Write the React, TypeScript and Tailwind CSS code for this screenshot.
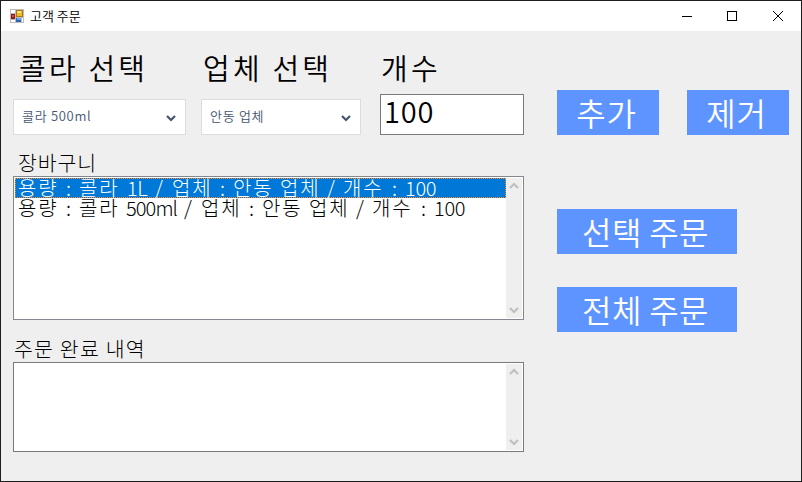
import type { ReactNode } from "react";

function Chevron({ up = false }: { up?: boolean }) {
  return (
    <svg width="10" height="8" viewBox="0 0 10 8" fill="none" stroke="currentColor" strokeWidth="2.2">
      <path d={up ? "M1 6 5 2 9 6" : "M1 2 5 6 9 2"} />
    </svg>
  );
}

function FormIcon() {
  return (
    <svg width="14" height="14" viewBox="0 0 14 14" shapeRendering="crispEdges">
      <path fill="#bdbdbd" d="M0 0h14v14H0z" />
      <path fill="#fff" d="M1 1h4v3H1zM1 11h4v2H1zM12 9h1v4h-1z" />
      <path fill="#a87810" d="M6 1h7v7H6z" />
      <path fill="#f5b921" d="M7 2h5v5H7z" />
      <path fill="#ffe18a" d="M7 2h4v2H7z" />
      <path fill="#8e1c1c" d="M1 5h4v5H1z" />
      <path fill="#d34b3b" d="M2 6h2v2H2z" />
      <path fill="#2b62bd" d="M6 9h5v4H6z" />
      <path fill="#6da4ef" d="M7 9h4v2H7z" />
    </svg>
  );
}

function Combo({ children, className }: { children: ReactNode; className: string }) {
  return (
    <div className={`flex h-9 items-center justify-between border border-[#dadce1] bg-white pr-[9px] pl-2 text-[#44546f] ${className}`}>
      <span className="pb-[3px] text-[13px] leading-none font-[350] tracking-[0.7px] whitespace-pre">{children}</span>
      <span className="flex pt-px">
        <Chevron />
      </span>
    </div>
  );
}

function ScrollTrack() {
  return (
    <div className="flex w-4 flex-col items-center justify-between bg-[#efefef] py-1 pr-px text-[#bfbfbf]">
      <Chevron up />
      <Chevron />
    </div>
  );
}

function CartRow({ size, sizeClass }: { size: string; sizeClass: string }) {
  return (
    <div className="flex tracking-[1.8px] whitespace-pre">
      <span className="w-[48px]">용량</span>
      <span className="w-[13px]">:</span>
      <span className="w-[47px]">콜라</span>
      <span className={sizeClass}>{size}</span>
      <span className="w-[17px]">/</span>
      <span className="w-[48px]">업체</span>
      <span className="w-[13px]">:</span>
      <span className="w-[47px]">안동</span>
      <span className="w-[47px]">업체</span>
      <span className="w-[16px]">/</span>
      <span className="w-[49px]">개수</span>
      <span className="w-[13px]">:</span>
      <span className="tracking-[-0.3px]">100</span>
    </div>
  );
}

function Action({ children, className }: { children: ReactNode; className: string }) {
  return (
    <button className={`h-[45px] bg-[#5e94ff] pb-px text-[32px] leading-none font-[350] whitespace-pre text-white ${className}`}>
      {children}
    </button>
  );
}

export default function App() {
  return (
    <div className="flex h-[482px] w-[802px] flex-col border border-[#1e1e1e] bg-[#efefef] font-['Noto_Sans_CJK_KR',sans-serif] text-black">
      <header className="flex h-[30px] items-center bg-white pl-[9px]">
        <FormIcon />
        <span className="ml-[6px] pb-px text-[13px] leading-none font-[350]">고객 주문</span>
        <svg width="104" height="12" viewBox="0 0 104 12" fill="none" stroke="#000" className="mr-[16px] ml-auto">
          <path d="M1 6.5h10M46.500 1.500h9v9h-9z" shapeRendering="crispEdges" />
          <path d="M92 1l10 10M102 1l-10 10" />
        </svg>
      </header>
      <main className="flex pl-3">
        <section className="w-[511px]">
          <div className="flex h-[63px] pt-[22px] text-[29px] leading-none font-[350] tracking-[3.2px] whitespace-pre">
            <span className="w-[183px] pl-[6px]">콜라 선택</span>
            <span className="w-[185px] pl-[7px]">업체 선택</span>
            <span>개수</span>
          </div>
          <div className="flex h-[41px] items-end">
            <Combo className="w-[173px]">콜라 500ml</Combo>
            <Combo className="ml-[15px] w-[160px]">안동 업체</Combo>
            <div className="ml-[19px] h-[41px] w-[144px] border border-[#7a7a7a] bg-white pt-px pl-[3px] text-[29px] leading-none font-[350] tracking-[0.8px]">100</div>
          </div>
          <h2 className="h-[41px] pt-[17px] pl-[5px] text-[20.500px] leading-none font-light tracking-[0.9px]">장바구니</h2>
          <div className="flex h-[144px] justify-between border border-[#828790] bg-white p-px font-light">
            <div className="w-[491px] text-[20px] leading-5">
              <div className="flex h-5 items-center border border-dotted border-[#ff8728] bg-[#0078d7] pl-0.5 text-white">
                <CartRow size="1L" sizeClass="w-[29px] pl-px tracking-[-0.5px]" />
              </div>
              <div className="h-5 pl-[3px]">
                <CartRow size="500ml" sizeClass="w-[58px] tracking-[-0.9px]" />
              </div>
            </div>
            <ScrollTrack />
          </div>
          <h2 className="h-[42px] pt-[18px] pl-px text-[20.500px] leading-none font-light tracking-[1.2px]">주문 완료 내역</h2>
          <div className="flex h-[90px] justify-end border border-[#7a7a7a] bg-white p-px">
            <ScrollTrack />
          </div>
        </section>
        <section className="ml-[33px] w-[232px] pt-[59px]">
          <div className="flex justify-between">
            <Action className="w-[102px] pr-[3px] tracking-[0.8px]">추가</Action>
            <Action className="w-[102px] pr-[3px] tracking-[0.8px]">제거</Action>
          </div>
          <Action className="mt-[74px] block w-[180px] pr-[3px] tracking-[0.4px]">선택 주문</Action>
          <Action className="mt-[33px] block w-[180px] pr-[3px] tracking-[0.4px]">전체 주문</Action>
        </section>
      </main>
    </div>
  );
}
